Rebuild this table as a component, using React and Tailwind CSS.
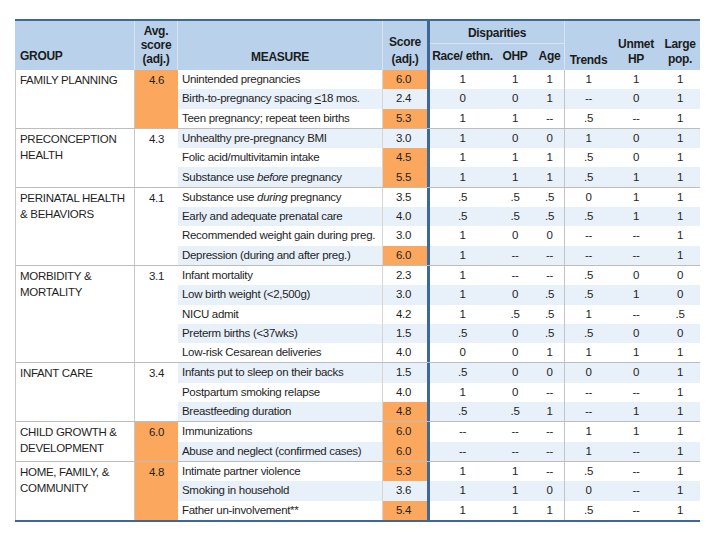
import React from 'react';

const ORANGE = 'bg-[#fba75e]';

const groups = [
  {
    name: 'FAMILY PLANNING',
    avg: '4.6',
    hot: true,
    rows: [
      { m: 'Unintended pregnancies', s: '6.0', hot: true, v: ['1', '1', '1', '1', '1', '1'] },
      { m: 'spacing', s: '2.4', v: ['0', '0', '1', '--', '0', '1'] },
      { m: 'Teen pregnancy; repeat teen births', s: '5.3', hot: true, v: ['1', '1', '--', '.5', '--', '1'] },
    ],
  },
  {
    name: 'PRECONCEPTION HEALTH',
    avg: '4.3',
    rows: [
      { m: 'Unhealthy pre-pregnancy BMI', s: '3.0', v: ['1', '0', '0', '1', '0', '1'] },
      { m: 'Folic acid/multivitamin intake', s: '4.5', hot: true, v: ['1', '1', '1', '.5', '0', '1'] },
      { m: 'before', s: '5.5', hot: true, v: ['1', '1', '1', '.5', '1', '1'] },
    ],
  },
  {
    name: 'PERINATAL HEALTH & BEHAVIORS',
    avg: '4.1',
    rows: [
      { m: 'during', s: '3.5', v: ['.5', '.5', '.5', '0', '1', '1'] },
      { m: 'Early and adequate prenatal care', s: '4.0', v: ['.5', '.5', '.5', '.5', '1', '1'] },
      { m: 'Recommended weight gain during preg.', s: '3.0', v: ['1', '0', '0', '--', '--', '1'] },
      { m: 'Depression (during and after preg.)', s: '6.0', hot: true, v: ['1', '--', '--', '--', '--', '1'] },
    ],
  },
  {
    name: 'MORBIDITY & MORTALITY',
    avg: '3.1',
    rows: [
      { m: 'Infant mortality', s: '2.3', v: ['1', '--', '--', '.5', '0', '0'] },
      { m: 'Low birth weight (<2,500g)', s: '3.0', v: ['1', '0', '.5', '.5', '1', '0'] },
      { m: 'NICU admit', s: '4.2', v: ['1', '.5', '.5', '1', '--', '.5'] },
      { m: 'Preterm births (<37wks)', s: '1.5', v: ['.5', '0', '.5', '.5', '0', '0'] },
      { m: 'Low-risk Cesarean deliveries', s: '4.0', v: ['0', '0', '1', '1', '1', '1'] },
    ],
  },
  {
    name: 'INFANT CARE',
    avg: '3.4',
    rows: [
      { m: 'Infants put to sleep on their backs', s: '1.5', v: ['.5', '0', '0', '0', '0', '1'] },
      { m: 'Postpartum smoking relapse', s: '4.0', v: ['1', '0', '--', '--', '--', '1'] },
      { m: 'Breastfeeding duration', s: '4.8', hot: true, v: ['.5', '.5', '1', '--', '1', '1'] },
    ],
  },
  {
    name: 'CHILD GROWTH & DEVELOPMENT',
    avg: '6.0',
    hot: true,
    rows: [
      { m: 'Immunizations', s: '6.0', hot: true, v: ['--', '--', '--', '1', '1', '1'] },
      { m: 'Abuse and neglect (confirmed cases)', s: '6.0', hot: true, v: ['--', '--', '--', '1', '--', '1'] },
    ],
  },
  {
    name: 'HOME, FAMILY, & COMMUNITY',
    avg: '4.8',
    hot: true,
    rows: [
      { m: 'Intimate partner violence', s: '5.3', hot: true, v: ['1', '1', '--', '.5', '--', '1'] },
      { m: 'Smoking in household', s: '3.6', v: ['1', '1', '0', '0', '--', '1'] },
      { m: 'Father un-involvement**', s: '5.4', hot: true, v: ['1', '1', '1', '.5', '--', '1'] },
    ],
  },
];

// group names wrap where the original slide wraps them
const groupLines = {
  'PRECONCEPTION HEALTH': ['PRECONCEPTION', 'HEALTH'],
  'PERINATAL HEALTH & BEHAVIORS': ['PERINATAL HEALTH', '& BEHAVIORS'],
  'MORBIDITY & MORTALITY': ['MORBIDITY &', 'MORTALITY'],
  'CHILD GROWTH & DEVELOPMENT': ['CHILD GROWTH &', 'DEVELOPMENT'],
  'HOME, FAMILY, & COMMUNITY': ['HOME, FAMILY, &', 'COMMUNITY'],
};

const valueCols = [
  'w-[65px]',
  'w-[40px]',
  'w-[30px] border-r border-[#c4c4c4]',
  'w-[47px]',
  'w-[48px]',
  'w-[40px]',
];

const MeasureText = ({ m }) => {
  if (m === 'spacing') {
    return (
      <>
        Birth-to-pregnancy spacing <span className="underline">&lt;</span>18 mos.
      </>
    );
  }
  if (m === 'before') {
    return (
      <>
        Substance use <i>before</i> pregnancy
      </>
    );
  }
  if (m === 'during') {
    return (
      <>
        Substance use <i>during</i> pregnancy
      </>
    );
  }
  return m;
};

const Header = () => (
  <div className="flex h-[49px] bg-[#b9d1ea] font-bold text-[12px] leading-[15px] text-[#1c1c1c]">
    <div className="w-[120px] border-r border-[#d8e4f1] flex items-end pl-[5px] pb-[6px]">GROUP</div>
    <div className="w-[43px] border-r border-[#d8e4f1] flex flex-col items-center justify-end pb-[4px] leading-[14px]">
      <span>Avg.</span>
      <span>score</span>
      <span>(adj.)</span>
    </div>
    <div className="w-[205px] border-r border-[#d8e4f1] flex items-end justify-center pb-[5px]">MEASURE</div>
    <div className="w-[47px] border-r-[3px] border-r-[#3e6996] flex flex-col items-center justify-end pb-[2px] leading-[17px]">
      <span>Score</span>
      <span>(adj.)</span>
    </div>
    <div className="w-[135px] flex flex-col border-r border-[#d8e4f1]">
      <div className="h-[23px] border-b border-[#d8e4f1] flex items-center justify-center pt-[2px]">Disparities</div>
      <div className="flex-1 flex items-center pb-[2px]">
        <div className="w-[65px] text-center">Race/ ethn.</div>
        <div className="w-[40px] text-center">OHP</div>
        <div className="w-[29px] text-center">Age</div>
      </div>
    </div>
    <div className="w-[47px] flex items-end justify-center pb-[2px]">Trends</div>
    <div className="w-[48px] flex flex-col items-center justify-end pb-[3px]">
      <span>Unmet</span>
      <span>HP</span>
    </div>
    <div className="w-[40px] flex flex-col items-center justify-end pb-[3px]">
      <span>Large</span>
      <span>pop.</span>
    </div>
  </div>
);

export default function App() {
  let idx = 0;
  return (
    <div className="w-[720px] h-[540px] bg-white pt-[19px] pl-[15px] font-['Liberation_Sans',Arial,sans-serif] text-[11.5px] text-[#1f1f1f] tracking-[-0.3px]">
      <div className="w-[685px] border-t-2 border-b-2 border-[#3e6996]">
        <Header />
        <div className="border-l border-[#c8c8c8]">
          {groups.map((g, gi) => {
            const lines = groupLines[g.name] || [g.name];
            return (
              <div key={g.name} className={`flex ${gi > 0 ? 'border-t border-[#bdbdbd]' : ''}`}>
                <div className="w-[119px] border-r border-[#c8c8c8] pl-[4px] pt-[2px] leading-[16px]">
                  {lines.map((l) => (
                    <div key={l}>{l}</div>
                  ))}
                </div>
                <div className={`w-[43px] text-center pt-[2px] leading-[16px] ${g.hot ? ORANGE : ''}`}>{g.avg}</div>
                <div className="flex flex-col w-[522px]">
                  {g.rows.map((r) => {
                    const band = idx++ % 2 === 1;
                    return (
                      <div key={r.m} className={`flex h-[19.3px] items-center ${band ? 'bg-[#e8f0f9]' : ''}`}>
                        <div className="w-[205px] h-full flex items-center pl-[4px] border-r border-[#d6d6d6] whitespace-nowrap">
                          <span>
                            <MeasureText m={r.m} />
                          </span>
                        </div>
                        <div className={`w-[47px] h-full flex items-center justify-center pr-[3px] border-r-[3px] border-r-[#3e6996] ${r.hot ? ORANGE : ''}`}>
                          {r.s}
                        </div>
                        {r.v.map((v, i) => (
                          <div key={i} className={`${valueCols[i]} h-full flex items-center justify-center`}>
                            {v}
                          </div>
                        ))}
                      </div>
                    );
                  })}
                </div>
              </div>
            );
          })}
        </div>
      </div>
    </div>
  );
}
